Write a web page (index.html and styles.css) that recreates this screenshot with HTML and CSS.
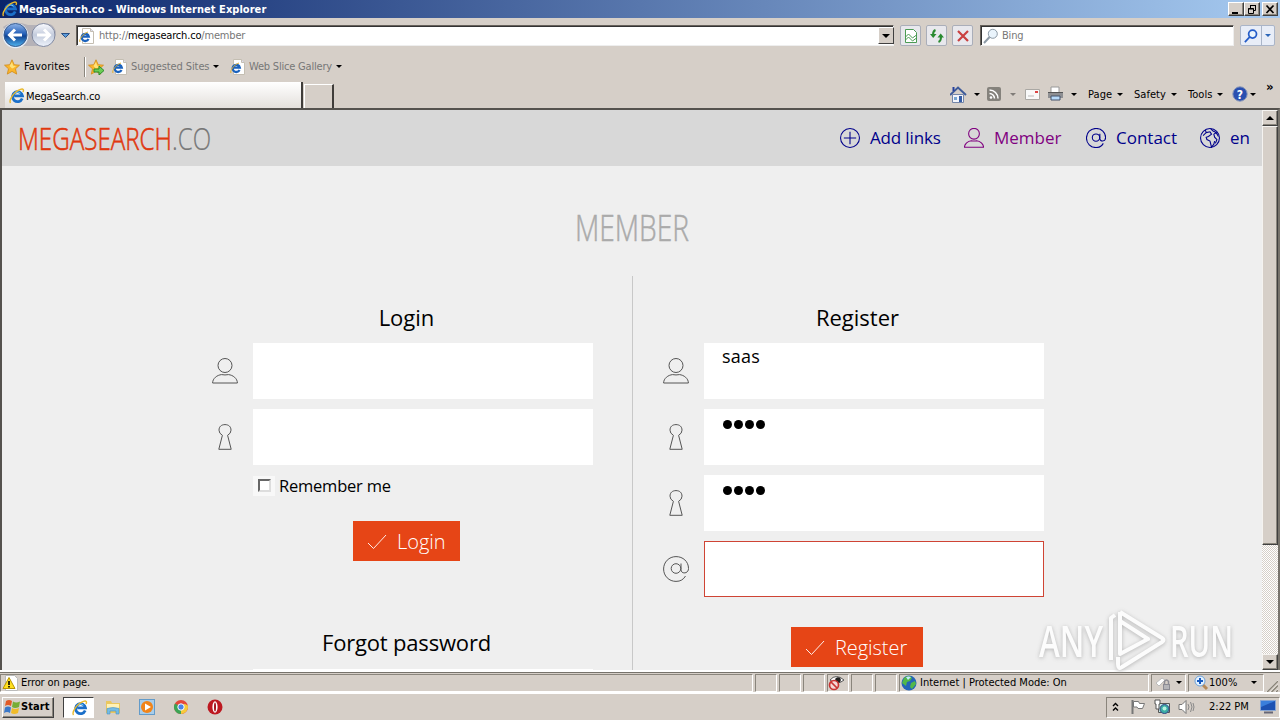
FILE: index.html
```
<!DOCTYPE html>
<html>
<head>
    <meta charset="utf-8">
    <title>MegaSearch.co</title>
    <link rel="stylesheet" href="styles.css">
</head>
<body>
<svg class="defs" width="0" height="0">
    <linearGradient id="blue" x1="0" y1="0" x2="0" y2="1"><stop offset="0" stop-color="#8fb4e8"/><stop offset=".45" stop-color="#2560b8"/><stop offset=".55" stop-color="#104494"/><stop offset="1" stop-color="#4fb4f0"/></linearGradient>
    <linearGradient id="pale" x1="0" y1="0" x2="0" y2="1"><stop offset="0" stop-color="#fafbff"/><stop offset=".5" stop-color="#c3cbdc"/><stop offset="1" stop-color="#eef3fc"/></linearGradient>
    <symbol id="ie" viewBox="0 0 16 16">
        <path d="M13.2 10.5a5 5 0 1 1 .3-2.6H5.2" fill="none" stroke="#1b6fc9" stroke-width="2.8"/>
        <path d="M11.5 5.2a4 4 0 0 0-6.3.8" fill="none" stroke="#6fc7f5" stroke-width="1"/>
        <path d="M1.5 15C-.5 12 5 3.500 11.500 1.300c3-.9 3.500.7 2.500 2.700" fill="none" stroke="#e9b92c" stroke-width="1.400"/>
    </symbol>
    <symbol id="iepage" viewBox="0 0 16 16">
        <path d="M3.500.5h8l3 3v12h-11z" fill="#fff" stroke="#c4beb2"/>
        <path d="M11.500.5v3h3" fill="#dde" stroke="#c4beb2"/>
        <path d="M9.500 11a3.600 3.600 0 1 1 .3-2.300H3.500" fill="none" stroke="#1b62bd" stroke-width="2.300"/>
        <path d="M1 14C-.5 12 4 5.500 9 4" fill="none" stroke="#e0b030"/>
    </symbol>
    <symbol id="star" viewBox="0 0 16 16">
        <path d="M8 .8l2.200 4.900 5.300.5-4 3.600 1.200 5.300L8 12.400l-4.700 2.700 1.200-5.300-4-3.600 5.300-.5z" fill="#fbb62c" stroke="#d08a18" stroke-width=".8"/>
        <path d="M8 3l1.200 3.700 3 .4-2.800 2L8 9.500 5.500 7z" fill="#ffe27a"/>
    </symbol>
    <symbol id="user" viewBox="0 0 26 26">
        <circle cx="13" cy="7.500" r="7"/>
        <path d="M.6 25c0-4.500 4.500-8 9-8.400q3.400.7 6.800 0c4.500.4 9 3.900 9 8.400z"/>
    </symbol>
    <symbol id="keyhole" viewBox="0 0 26 26">
        <path d="M10.400 11.300Q7 9.500 7 6.200C7 2.500 9.500.6 13 .6s6 1.900 6 5.600q0 3.300-3.400 5.100l3.600 14H6.800z"/>
    </symbol>
    <symbol id="at" viewBox="0 0 26 26">
        <circle cx="13" cy="12.500" r="4.800"/>
        <path d="M18 7.500v6.300c0 4.400 7.500 4.300 7.500-1.300C25.500 5.500 20 .6 13 .6S.6 6 .6 13 6 25.400 13 25.400c4.500 0 7.500-1.900 9.500-5.400"/>
    </symbol>
    <symbol id="plus" viewBox="0 0 26 26"><circle cx="13" cy="13" r="12.300"/><path d="M13 5v16M5 13h16"/></symbol>
    <symbol id="globe" viewBox="0 0 26 26">
        <circle cx="13" cy="13" r="12.300"/>
        <path d="M7 2.500l1 3.500-4 4M8 6l5-1 2 3-4 3-3 1 1 3 4 2 2 8 3-4 1-4M14 1l3 3 4 2-3 2 1 4 3 3-2 5M21 6l3 5"/>
    </symbol>
    <symbol id="check" viewBox="0 0 20 16"><path d="M1 9l5.500 5.500L19 1"/></symbol>
    <symbol id="lens" viewBox="0 0 16 16"><circle cx="9.800" cy="5.800" r="4.500" fill="#eaf4fc"/><path d="M6.600 9L1 15" stroke-width="2"/></symbol>
</svg>

<header class="titlebar">
    <svg class="i16"><use href="#ie"/></svg>
    <h1 class="title">MegaSearch.co - Windows Internet Explorer</h1>
    <div class="winbtns">
        <span class="winbtn"><svg width="12" height="11"><path d="M2 9h6" stroke="#000" stroke-width="2"/></svg></span>
        <span class="winbtn"><svg width="12" height="11"><path d="M4.500 4V1.500h5v5H8M4 1.500h6" fill="none" stroke="#000"/><path d="M2.500 4.500h5v5h-5zM2 5h6" fill="none" stroke="#000"/></svg></span>
        <span class="winbtn close"><svg width="12" height="11"><path d="M2.500 1.500l7 7.500m0-7.500l-7 7.500" stroke="#000" stroke-width="1.700"/></svg></span>
    </div>
</header>

<nav class="navbar">
    <svg class="travel" width="74" height="30" viewBox="0 0 74 30">
        <path d="M3 6Q14-2 28 4h16q9-4 12 7-3 14-13 14H16z" fill="#b5b2b8"/>
        <circle cx="15.500" cy="14.500" r="12.800" fill="#e4eefa"/>
        <circle cx="15.500" cy="14" r="11.500" fill="url(#blue)" stroke="#3a5b8c"/>
        <path d="M22 14H10m5-5.500L9.500 14l5.500 5.500" fill="none" stroke="#fff" stroke-width="3"/>
        <circle cx="43.500" cy="14" r="11.500" fill="url(#pale)" stroke="#8189a0"/>
        <path d="M37 14h12m-5-5.500l5.500 5.500-5.500 5.500" fill="none" stroke="#fff" stroke-width="3"/>
        <path d="M61.500 12.500h8l-4 4z" fill="#5b9ad8" stroke="#294f83"/>
    </svg>
    <div class="address">
        <svg class="i16"><use href="#iepage"/></svg>
        <span class="url">http://<b>megasearch.co</b>/member</span>
        <span class="drop"><i class="arrow big"></i></span>
    </div>
    <span class="tool"><svg width="14" height="16"><path d="M1.500 1.500h8l3 3v10h-11z" fill="#fff" stroke="#4b9b54"/><path d="M1.500 9l3-3 4 4 4-3M1.500 12l3-3 4 4 4-3" fill="none" stroke="#4b9b54"/></svg></span>
    <span class="tool"><svg width="16" height="14"><path d="M6.500 1Q4 2 4 6M9.500 13q2.500-1 2.500-5" fill="none" stroke="#298a30" stroke-width="2"/><path d="M1 5h6.500L4.200 9zM8.500 8.500H15l-3.300-4z" fill="#298a30"/></svg></span>
    <span class="tool"><svg width="14" height="14"><path d="M2 2l10 10m0-10L2 12" stroke="#ca4040" stroke-width="2.200"/></svg></span>
    <div class="search">
        <svg class="i16 gray"><use href="#lens"/></svg>
        <span>Bing</span>
    </div>
    <div class="go">
        <span><svg class="lensblue" width="14" height="14"><use href="#lens"/></svg></span>
        <span class="godrop"><i class="arrow blue"></i></span>
    </div>
</nav>

<div class="favbar">
    <svg class="i16"><use href="#star"/></svg>
    <span class="favorites">Favorites</span>
    <i class="sep"></i>
    <svg class="i16"><use href="#star"/><path d="M6 10h5V7l5 4.500-5 4.500v-3H6z" fill="#6cce54" stroke="#2b8a2a"/></svg>
    <svg class="i16 sugg"><use href="#iepage"/></svg>
    <span class="link s1">Suggested Sites</span><i class="arrow"></i>
    <svg class="i16 slice"><use href="#iepage"/></svg>
    <span class="link s2">Web Slice Gallery</span><i class="arrow"></i>
</div>

<div class="tabs">
    <div class="tab"><svg class="i16"><use href="#ie"/></svg><span>MegaSearch.co</span></div>
    <div class="newtab"></div>
    <div class="cmds">
        <svg width="17" height="17"><path d="M2.500 8.500h11v8h-11z" fill="#f3f5fb" stroke="#7586a8"/><path d="M0 9l8-7.500L16 9" fill="none" stroke="#3e5b9a" stroke-width="2"/><path d="M3.500 1v4" stroke="#253f9c" stroke-width="2"/><path d="M9 10h3v6H9z" fill="#345ca5"/><path d="M4 11h3v3H4z" fill="#79a7d2"/></svg>
        <i class="arrow a1"></i>
        <svg class="feed" width="14" height="14"><rect width="14" height="14" rx="2" fill="#85827c"/><circle cx="4" cy="10.500" r="1.300" fill="#fff"/><path d="M2.500 6.500a5 5 0 0 1 5 5M2.500 3a8.500 8.500 0 0 1 8.500 8.500" fill="none" stroke="#fff" stroke-width="1.500"/></svg>
        <i class="arrow a2"></i>
        <svg class="mail" width="15" height="11"><path d="M.5.5h14v10H.5z" fill="#f9f9f9" stroke="#aaa8a4"/><path d="M10 2h3v2h-3z" fill="#d44"/><path d="M3 7h6" stroke="#bbb"/></svg>
        <svg class="printer" width="17" height="16"><path d="M4 1h8v6H4z" fill="#fff" stroke="#999"/><path d="M1 6h15v6H1z" fill="#8e8f92"/><path d="M1 6.500h15" stroke="#555"/><path d="M4 10h9v4H4z" fill="#b7dafa" stroke="#44526a"/></svg>
        <i class="arrow a3"></i>
        <span class="c1">Page</span><i class="arrow"></i>
        <span class="c2">Safety</span><i class="arrow"></i>
        <span class="c3">Tools</span><i class="arrow"></i>
        <svg class="help" width="16" height="16"><circle cx="8" cy="8" r="7.200" fill="#294fb0" stroke="#8796b8"/><text x="8" y="12.500" text-anchor="middle" class="q">?</text></svg>
        <i class="arrow a4"></i>
        <b class="more">»</b>
    </div>
</div>

<div class="view">
    <div class="page">
        <div class="top">
            <svg class="logo" width="200" height="52">
                <text x="0" y="38" textLength="154" lengthAdjust="spacingAndGlyphs"><tspan class="mega">MEGASEARCH</tspan></text>
                <text x="154" y="38" textLength="39" lengthAdjust="spacingAndGlyphs" class="co">.CO</text>
            </svg>
            <div class="menu">
                <a class="m1"><svg class="line"><use href="#plus"/></svg>Add links</a>
                <a class="m2"><svg class="line"><use href="#user"/></svg>Member</a>
                <a class="m3"><svg class="line"><use href="#at"/></svg>Contact</a>
                <a class="m4"><svg class="line"><use href="#globe"/></svg>en</a>
            </div>
        </div>
        <svg class="heading" width="118" height="56"><text x="1" y="42" textLength="114" lengthAdjust="spacingAndGlyphs">MEMBER</text></svg>
        <div class="cols">
            <div class="col">
                <h2>Login</h2>
                <div class="row"><svg class="line"><use href="#user"/></svg><div class="field"></div></div>
                <div class="row"><svg class="line"><use href="#keyhole"/></svg><div class="field"></div></div>
                <div class="remember"><span class="chk"><i></i></span>Remember me</div>
                <a class="btn login"><svg width="20" height="16"><use href="#check"/></svg><span>Login</span></a>
                <h2 class="forgot">Forgot password</h2>
                <div class="row"><svg class="line"><use href="#user"/></svg><div class="field"></div></div>
            </div>
            <div class="col right">
                <h2>Register</h2>
                <div class="row"><svg class="line"><use href="#user"/></svg><div class="field">saas</div></div>
                <div class="row"><svg class="line"><use href="#keyhole"/></svg><div class="field"><i class="dot"></i><i class="dot"></i><i class="dot"></i><i class="dot"></i></div></div>
                <div class="row"><svg class="line"><use href="#keyhole"/></svg><div class="field"><i class="dot"></i><i class="dot"></i><i class="dot"></i><i class="dot"></i></div></div>
                <div class="row"><svg class="line"><use href="#at"/></svg><div class="field error"></div></div>
                <a class="btn register"><svg width="20" height="16"><use href="#check"/></svg><span>Register</span></a>
            </div>
        </div>
    </div>
    <div class="scroll">
        <span class="sbtn"><i class="arrow up"></i></span>
        <span class="thumb"></span>
        <span class="sbtn end"><i class="arrow big"></i></span>
    </div>
    <svg class="watermark" width="202" height="66">
        <text x="4" y="49" textLength="64" lengthAdjust="spacingAndGlyphs">ANY</text>
        <text x="135" y="49" textLength="63" lengthAdjust="spacingAndGlyphs">RUN</text>
        <path d="M76 52V10l4-3M85 4l42 26q3 2 0 4L87 59q-4 3-4-3v-7M85 4v42l28-15L85 13"/>
    </svg>
</div>

<footer class="status">
    <div class="cell msg">
        <svg class="i16"><path d="M3.500.5h9l3 3v12h-12z" fill="#fff" stroke="#bbb"/><path d="M7 2.500L13 13.500H1z" fill="#ffe01e" stroke="#b89400"/><path d="M7 6v4M7 11v1.500" stroke="#000" stroke-width="1.600"/></svg>
        <span>Error on page.</span>
    </div>
    <div class="cell sm"></div>
    <div class="cell sm"></div>
    <div class="cell sm"></div>
    <div class="cell sm"><svg width="18" height="17"><path d="M2 6q6-7 14 0-7 6-14 0z" fill="#fff" stroke="#555"/><circle cx="10" cy="6" r="2.800" fill="#222"/><circle cx="6" cy="11" r="4.500" fill="#f4d8d8" stroke="#c93434" stroke-width="1.700"/><path d="M3 8l6 6" stroke="#c93434" stroke-width="1.700"/></svg></div>
    <div class="cell sm"></div>
    <div class="cell sm"></div>
    <div class="cell zone">
        <svg class="i16"><circle cx="8" cy="8" r="7.500" fill="#2464b8"/><path d="M3 3q5-4 8 0l-2 3-3 1-1 4-4-3zM10 8l4-2 1 3-4 5-2-2z" fill="#52b848"/><path d="M5 2q3-1 5 0L7 5z" fill="#c4eaff"/></svg>
        <span>Internet | Protected Mode: On</span>
    </div>
    <div class="cell lock"><svg width="17" height="16"><path d="M1 8l6-5 3 2-6 6z" fill="#fff" stroke="#bbb"/><path d="M8 9h7v6H8z" fill="#8c8c94"/><path d="M9.500 9V6.500q2-3 4 0V9" fill="none" stroke="#8c8c94" stroke-width="1.500"/><path d="M9 11h5M9 13h5" stroke="#ddd"/></svg><i class="arrow"></i></div>
    <div class="cell zoom">
        <svg class="i16" viewBox="0 0 16 16"><path d="M8 9l5 5" stroke="#b68a58" stroke-width="3"/><circle cx="6" cy="6" r="5" fill="#e3f1ff" stroke="#6ca1d8"/><path d="M6 3v6M3 6h6" stroke="#175bc0" stroke-width="2"/></svg>
        <span>100%</span><i class="arrow"></i>
    </div>
    <svg class="grip" width="12" height="12"><path d="M0 12L12 0M4.500 12L12 4.500M9 12l3-3" stroke="#fff"/><path d="M1 12L12 1M5.500 12L12 5.500M10 12l2-2" stroke="#8a8478" stroke-width="1.500"/></svg>
</footer>

<div class="taskbar">
    <div class="start">
        <svg width="17" height="16"><path d="M2 2q3-2 6 0L7 7Q4 5 1 7z" fill="#e25a25"/><path d="M9 2.500q3 2 7 0L15 8q-4 2-7 0z" fill="#77ad35"/><path d="M1 8.500q3-2 6 0L6 14q-3-2-6 0z" fill="#3b78c8"/><path d="M8 9q3 2 7 0l-1 5q-4 2-7 0z" fill="#f0bb28"/></svg>
        <b>Start</b>
    </div>
    <div class="task"><svg class="i16"><use href="#ie"/></svg></div>
    <svg class="i16 t1"><path d="M1 2h5l1 2h8v10H1z" fill="#eac75e"/><path d="M2 5h12v5H2z" fill="#fff1b5"/><path d="M2 15V9.500q6-2 12 0V15h-3v-3H5v3z" fill="#74bce5" stroke="#4c92bf" stroke-width=".6"/></svg>
    <svg class="i16 t2"><rect x=".5" y=".5" width="15" height="15" fill="#a8cdea" stroke="#639bc9"/><circle cx="8" cy="8" r="6" fill="#f18419"/><path d="M6 4.500L12 8l-6 3.500z" fill="#fff"/></svg>
    <svg class="i16 t3"><circle cx="8" cy="8" r="7" fill="#e5473a"/><path d="M8 8L2 4.400A7 7 0 0 0 8 15l3-5z" fill="#3ca455"/><path d="M8 8h0l3.500-3.200 3.300 1.700A7 7 0 0 1 8 15z" fill="#f6cb3a"/><circle cx="8" cy="8" r="3.200" fill="#4a83e8" stroke="#fff"/></svg>
    <svg class="i16 t4"><circle cx="8" cy="8" r="7.500" fill="#bd1820"/><ellipse cx="8" cy="8" rx="2.600" ry="5.800" fill="#fff"/><ellipse cx="8" cy="8" rx="1" ry="4.600" fill="#a3141c"/></svg>
    <div class="tray">
        <svg class="chev" width="7" height="10"><path d="M1 4l2.500-2.500L6 4M1 8.500L3.500 6 6 8.500" fill="none" stroke="#000" stroke-width="1.400"/></svg>
        <svg class="flag" width="16" height="16"><path d="M2.500 1v14" stroke="#777" stroke-width="2"/><path d="M3.500 2.500h5l1 2h5l-2 5H8l-1-1.500H3.500z" fill="#fff" stroke="#777"/></svg>
        <svg class="net" width="17" height="16"><path d="M4.500 4.500h11v9h-11z" fill="#c4e7e4" stroke="#555"/><circle cx="10.500" cy="10" r="4.500" fill="#3cada5" stroke="#348"/><circle cx="10.500" cy="9.500" r="2" fill="#b7f4e0"/><path d="M1 1h5v4H5v5H2V5H1z" fill="#fff" stroke="#555"/></svg>
        <svg class="vol" width="18" height="16"><path d="M1 5.500h3l4-4v13l-4-4H1z" fill="#fff" stroke="#777"/><path d="M10 5q2 3 0 6M12.500 3q3 5 0 10M15 4q2 4 0 8" fill="none" stroke="#888"/></svg>
        <span class="clock">2:22 PM</span>
        <svg class="desk" width="16" height="14"><path d="M.5.500h15v10H.5z" fill="#1d52b2" stroke="#88a6d4"/><path d="M1 1h14L1 7z" fill="#3a7fdc"/><path d="M4 12.500h9" stroke="#667" stroke-width="2"/></svg>
    </div>
</div>
</body>
</html>
```
FILE: styles.css
```
* {box-sizing: border-box;}
body {
    margin: 0;
    width: 1280px;
    height: 720px;
    overflow: hidden;
    background: #d6cfc8;
    color: #000;
    font: 11px/14px "DejaVu Sans Condensed", "DejaVu Sans", sans-serif;
    font-stretch: condensed;
    white-space: nowrap;
    display: flex;
    flex-direction: column;
}
.defs {position: absolute;}
svg {flex: none;display: block;}
.i16 {width: 16px;height: 16px;}
.arrow {flex: none;width: 0;height: 0;border: 3px solid transparent;border-top-color: #000;border-bottom: 0;}
.arrow.blue {border-top-color: #2c66b8;}
.arrow.big {border-width: 4px 4px 0;}
.arrow.up {border: 4px solid transparent;border-top: 0;border-bottom-color: #000;}

/* window title */
.titlebar {height: 18px;flex: none;display: flex;align-items: center;padding: 0 2px;background: linear-gradient(to right, #0a246a, #a6caf0);}
.title {margin: 0;padding-top: 1px;font-size: 11px;line-height: 14px;font-weight: bold;color: #fff;letter-spacing: .04px;margin-left: 1px;}
.winbtns {display: flex;margin-left: auto;}
.winbtn {width: 16px;height: 14px;padding: 1px;background: #d6cfc8;border: 1px solid;border-color: #fff #404040 #404040 #fff;box-shadow: inset -1px -1px #8a857c;}
.winbtn.close {margin-left: 2px;}

/* address row */
.navbar {height: 35px;flex: none;display: flex;align-items: center;padding-right: 5px;}
.travel {margin: 0 2px 0 0;}
.address, .search {height: 21px;background: #fff;border: 1px solid;border-color: #66615b #eee #eee #66615b;box-shadow: inset 1px 1px #333;display: flex;align-items: center;color: #777;}
.address {width: 818px;padding-left: 2px;}
.url {margin-left: 4px;padding-top: 1px;letter-spacing: -.18px;}
.url b {font-weight: normal;color: #000;}
.drop {width: 16px;height: 17px;margin: 0 -1px 0 auto;display: flex;align-items: center;justify-content: center;background: #d6cfc8;border: 1px solid;border-color: #fff #404040 #404040 #fff;}
.tool {width: 21px;height: 21px;margin-left: 5px;display: flex;align-items: center;justify-content: center;background: #e8e8ed;border: 1px solid #aaaeb9;border-radius: 2px;}
.tool:nth-of-type(1) {margin-left: 6px;}
.search {width: 254px;margin-left: 7px;padding-left: 2px;}
.search span {margin-left: 3px;padding-top: 1px;letter-spacing: -.2px;}
.gray {stroke: #8d9aa6;}
.lensblue {stroke: #245cc8;stroke-width: 2;}
.go {display: flex;width: 35px;height: 21px;margin-left: auto;border: 1px solid #aab5c8;border-radius: 2px;background: #e8edf7;}
.go span {width: 20px;display: flex;align-items: center;justify-content: center;}
.go .godrop {width: 13px;border-left: 1px solid #aab5c8;}

/* favorites row */
.favbar {height: 27px;flex: none;display: flex;align-items: center;padding-left: 4px;}
.favorites {margin-left: 4px;width: 60px;letter-spacing: .12px;}
.sep {width: 2px;height: 20px;border-left: 1px solid #8a857c;border-right: 1px solid #fff;margin-right: 2px;}
.link {color: #777;padding-top: 1px;letter-spacing: -.1px;}
.sugg {margin: 0 3px 0 8px;}
.slice {margin: 0 3px 0 11px;}
.s1 {width: 82px;}
.s2 {width: 87px;letter-spacing: -.2px;}

/* tabs and command bar */
.tabs {height: 28px;flex: none;display: flex;align-items: flex-end;padding-left: 5px;}
.tab {width: 298px;height: 26px;display: flex;align-items: center;padding: 2px 0 0 4px;background: linear-gradient(#fff, #e4e0dc);border-right: 2px solid #403d3a;}
.tab span {margin-left: 1px;letter-spacing: -.1px;padding-top: 1px;}
.newtab {width: 30px;height: 24px;margin-left: 1px;border: 1px solid #fff;border-bottom: 0;border-right: 2px solid #403d3a;}
.cmds {flex: 1;height: 28px;display: flex;align-items: center;padding-left: 616px;}
.a1 {margin: 0 7px;}
.feed {margin-left: 0;}
.a2 {margin: 0 9px 0 9px;opacity: .4;}
.printer {margin-left: 7px;}
.a3 {margin: 0 11px 0 7px;}
.c1 {width: 29px;}
.c2 {width: 37px;margin-left: 11px;}
.c3 {width: 29px;margin-left: 11px;}
.c1, .c2, .c3 {padding-top: 1px;letter-spacing: .05px;}
.help {margin-left: 9px;}
.q {font-size: 12px;font-weight: bold;fill: #fff;}
.a4 {margin-left: 2px;}
.more {font-size: 13px;margin: -14px 0 0 10px;}

/* browser viewport */
.view {position: relative;height: 562px;flex: none;display: flex;border: 2px solid #55524e;border-top-width: 2px;border-right: 2px solid #77736c;border-bottom: 0;}
.page {width: 1260px;height: 560px;overflow: hidden;background: #efefef;font-family: "Open Sans", sans-serif;font-stretch: normal;}
.top {height: 56px;background: #d8d8d8;display: flex;align-items: center;padding: 0 12px 0 16px;}
.logo text {font-size: 32px;font-weight: 300;}
.mega {fill: #e0380f;stroke: #e0380f;stroke-width: .6;}
.co {fill: #777;stroke: #777;stroke-width: .2;}
.menu {display: flex;margin-left: auto;color: #00008b;font-size: 17px;}
.menu a {display: flex;align-items: center;}
.menu .line {width: 20px;height: 20px;margin-right: 10px;stroke-width: 1.400;}
.m1 {width: 124px;letter-spacing: -.15px;}
.m2 {width: 122px;color: #800080;}
.m3 {width: 114px;}
.m4 {width: 50px;}
.line {fill: none;stroke: currentColor;overflow: visible;}
.heading {margin: 33px 0 0 572px;}
.heading text {font-size: 37px;font-weight: 300;fill: #aaa;stroke: #aaa;stroke-width: .5;}
.cols {display: flex;margin: 21px 0 0 179px;height: 500px;}
.col {width: 452px;padding-left: 31px;border-right: 1px solid #c8c8c8;}
.col.right {border: 0;padding-left: 30px;}
h2 {margin: 26px 31px 11px 0;padding-right: 2px;height: 30px;font-size: 22px;line-height: 30px;font-weight: normal;text-align: center;}
.col:not(.right) h2 {margin-right: 30px;padding-right: 1px;}
.row {display: flex;align-items: center;margin-bottom: 10px;color: #555;}
.row .line {width: 26px;height: 26px;margin: -1px 15px 0 0;}
.field {width: 340px;height: 56px;padding: 0 18px;background: #fff;color: #000;font-size: 18px;line-height: 26px;letter-spacing: .2px;}
.field.error {border: 1px solid #cf4434;}
.dot {display: inline-block;width: 9px;height: 9px;margin: 10px 1px 0;border-radius: 50%;background: #000;}
.remember {display: flex;align-items: center;height: 21px;margin-left: 41px;font-size: 16.5px;letter-spacing: -.22px;}
.chk {width: 22px;height: 20px;margin-right: 4px;padding: 3px 5px;background: #f8f8f8;}
.chk i {display: block;width: 13px;height: 13px;background: #fff;border: 2px solid;border-color: #666 #ddd #ddd #666;}
.btn {display: flex;align-items: center;height: 40px;padding-left: 14px;background: #e64516;color: #fff;font-size: 20px;font-weight: 300;}
.btn span {padding-top: 2px;letter-spacing: -.05px;}
.btn svg {margin: 2px 10px 0 0;fill: none;stroke: #fff;stroke-width: .9;}
.login {width: 107px;margin: 25px 0 0 141px;}
.register {width: 132px;margin: 30px 0 0 128px;}
.col .forgot {margin-top: 66px;margin-bottom: 12px;letter-spacing: -.18px;}

.scroll {width: 16px;display: flex;flex-direction: column;background: repeating-conic-gradient(#fff 0 25%, #d6cfc8 0 50%) 0 0/2px 2px;}
.sbtn, .thumb {background: #d6cfc8;border: 1px solid;border-color: #f5f3f0 #404040 #404040 #f5f3f0;box-shadow: inset -1px -1px #8a857c;}
.sbtn {height: 16px;flex: none;display: flex;align-items: center;justify-content: center;}
.thumb {height: 419px;}
.end {margin-top: auto;}

/* logo over the page corner */
.watermark {position: absolute;left: 1033px;top: 498px;opacity: .85;filter: drop-shadow(0 1px 2px #aaa);}
.watermark text {font: 600 43px "Open Sans", sans-serif;fill: #fff;}
.watermark path {fill: none;stroke: #fff;stroke-width: 4;stroke-linejoin: round;}

/* status bar */
.status {height: 24px;flex: none;display: flex;align-items: center;padding-top: 1px;border-top: 2px solid #fff;border-bottom: 2px solid #fff;box-shadow: inset 0 1px #77736c;}
.cell {height: 18px;display: flex;align-items: center;border: 1px solid;border-color: #8a857c #fff #fff #8a857c;margin-right: 2px;}
.cell span {padding-top: 1px;}
.msg {width: 753px;padding-left: 1px;}
.msg span {margin-left: 3px;letter-spacing: -.1px;}
.sm {width: 22px;}
.zone {width: 250px;padding-left: 1px;}
.zone span {margin-left: 3px;}
.lock {width: 35px;padding-left: 3px;}
.lock .arrow {margin-left: 4px;}
.zoom {width: 76px;padding-left: 5px;}
.zoom span {margin-left: -1px;}
.zoom .arrow {margin-left: 14px;}
.grip {margin-top: 6px;}

/* taskbar */
.taskbar {height: 24px;flex: none;display: flex;align-items: center;padding-top: 2px;}
.start {width: 52px;height: 21px;margin-left: 2px;padding-left: 1px;display: flex;align-items: center;border: 1px solid;border-color: #fff #404040 #404040 #fff;box-shadow: inset -1px -1px #8a857c;}
.start b {font-size: 11px;margin-left: 0;letter-spacing: .1px;}
.task {width: 31px;height: 21px;margin-left: 9px;padding: 2px 8px;background: #fff;border: 1px solid;border-color: #404040 #fff #fff #404040;}
.t1 {margin-left: 11px;}
.t2, .t3, .t4 {margin-left: 18px;}
.tray {width: 174px;height: 21px;margin: 0 0 0 auto;display: flex;align-items: center;border: 1px solid;border-color: #8a857c #fff #fff #8a857c;}
.chev {margin-left: 5px;}
.flag {margin-left: 11px;}
.net {margin-left: 8px;}
.vol {margin-left: 7px;}
.clock {width: 51px;margin-left: 13px;}
```
